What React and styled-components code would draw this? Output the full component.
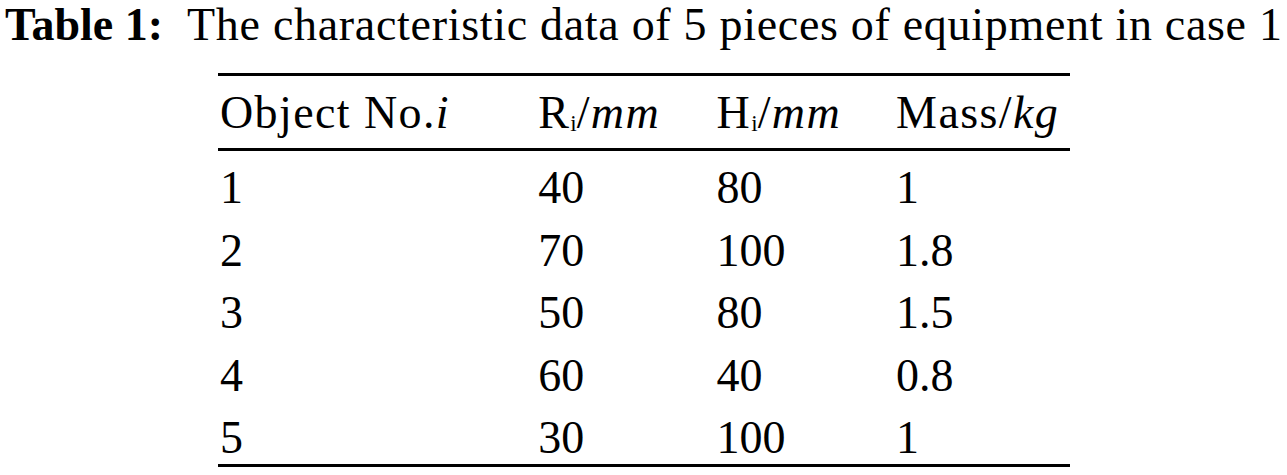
import React from "react";
import styled, { createGlobalStyle } from "styled-components";

const GlobalStyle = createGlobalStyle`
  html, body {
    margin: 0;
    padding: 0;
    background: #ffffff;
  }
  body {
    font-family: "Liberation Serif", "Times New Roman", serif;
    color: #000000;
  }
`;

const Page = styled.div`
  width: 1287px;
  height: 475px;
  overflow: hidden;
  display: flex;
  flex-direction: column;
`;

const Caption = styled.div`
  padding-left: 5px;
  font-size: 46px;
  line-height: 50px;
  letter-spacing: 0.7px;
  white-space: nowrap;

  b {
    font-weight: 700;
    letter-spacing: 0;
    margin-right: 24px;
  }
`;

const DataTable = styled.table`
  margin: 23px 0 0 218px;
  width: 852px;
  border-collapse: collapse;
  font-size: 46px;
  border-top: 3px solid #000;
  border-bottom: 3px solid #000;
`;

const HeadCell = styled.th`
  font-weight: 400;
  text-align: left;
  padding: 12px 0 10px ${({ $indent }) => $indent || 0}px;
  line-height: 50px;
  letter-spacing: 1.4px;
  width: ${({ $width }) => $width}px;
  border-bottom: 3px solid #000;
  white-space: nowrap;

  i {
    font-style: italic;
  }
`;

const Cell = styled.td`
  padding: 12px 0 0 ${({ $indent }) => $indent || 0}px;
  line-height: 50.5px;
  white-space: nowrap;
`;

const Sub = styled.sub`
  font-size: 0.5em;
  line-height: 0;
  letter-spacing: 0;
  vertical-align: -0.15em;
`;

const columns = [
  { width: 319, indent: 2 },
  { width: 179 },
  { width: 180 },
  { width: 174 },
];

const rows = [
  ["1", "40", "80", "1"],
  ["2", "70", "100", "1.8"],
  ["3", "50", "80", "1.5"],
  ["4", "60", "40", "0.8"],
  ["5", "30", "100", "1"],
];

export default function App() {
  return (
    <Page>
      <GlobalStyle />
      <Caption>
        <b>Table 1:</b>The characteristic data of 5 pieces of equipment in case 1
      </Caption>
      <DataTable>
        <thead>
          <tr>
            <HeadCell $width={columns[0].width} $indent={columns[0].indent}>
              Object No.<i>i</i>
            </HeadCell>
            <HeadCell $width={columns[1].width}>
              R<Sub>i</Sub>/<i>mm</i>
            </HeadCell>
            <HeadCell $width={columns[2].width}>
              H<Sub>i</Sub>/<i>mm</i>
            </HeadCell>
            <HeadCell $width={columns[3].width}>
              Mass/<i>kg</i>
            </HeadCell>
          </tr>
        </thead>
        <tbody>
          {rows.map((row) => (
            <tr key={row[0]}>
              {row.map((value, i) => (
                <Cell key={i} $indent={columns[i].indent}>
                  {value}
                </Cell>
              ))}
            </tr>
          ))}
        </tbody>
      </DataTable>
    </Page>
  );
}
